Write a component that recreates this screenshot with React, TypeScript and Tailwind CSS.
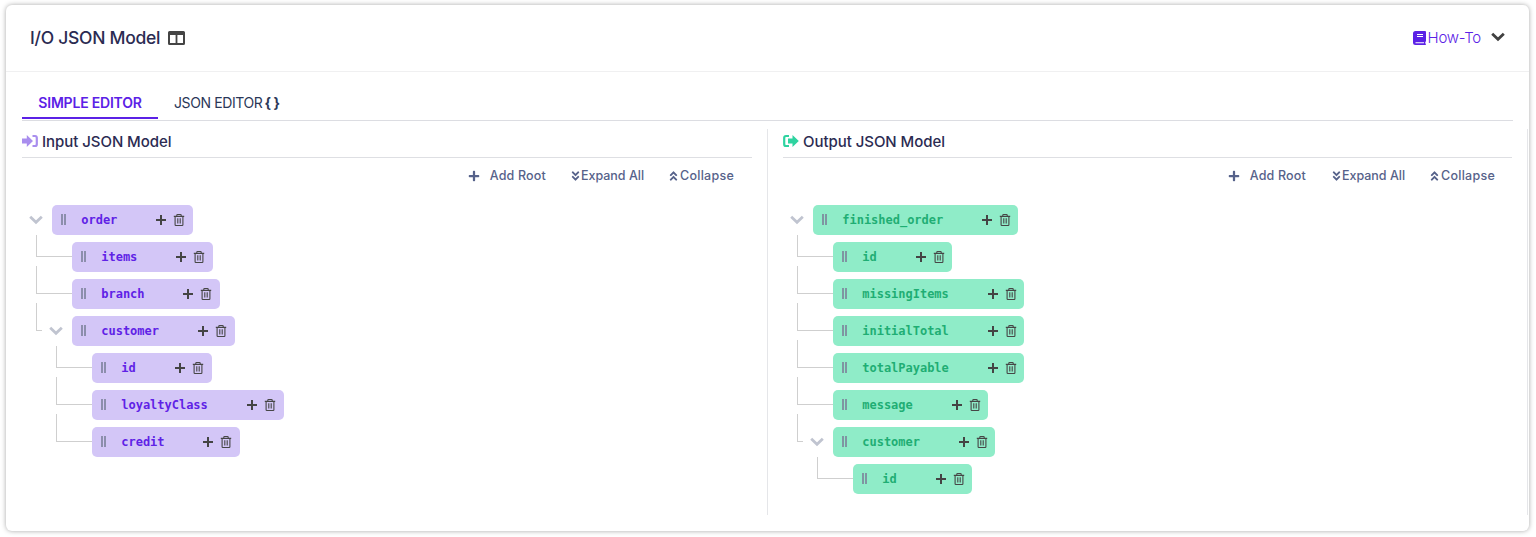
import { FaPlus, FaAngleDoubleDown, FaAngleDoubleUp } from "react-icons/fa";

type Field = { name: string; children?: Field[] };
type Tone = "violet" | "green";

const inputModel: Field = {
  name: "order",
  children: [
    { name: "items" },
    { name: "branch" },
    { name: "customer", children: [{ name: "id" }, { name: "loyaltyClass" }, { name: "credit" }] },
  ],
};

const outputModel: Field = {
  name: "finished_order",
  children: [
    { name: "id" },
    { name: "missingItems" },
    { name: "initialTotal" },
    { name: "totalPayable" },
    { name: "message" },
    { name: "customer", children: [{ name: "id" }] },
  ],
};

const nodeTone = {
  violet: "bg-[#d3c6f7] text-[#5f22e6] pr-[8px]",
  green: "bg-[#8fecc8] text-[#1fae74] pr-[7.400px]",
};

function Chevron({ className }: { className: string }) {
  return (
    <svg viewBox="0 0 14 10" className={className} fill="none" stroke="currentColor" strokeWidth="2.8">
      <path d="M1.2 1.7 7 7.2l5.800-5.500" />
    </svg>
  );
}

function Trash() {
  return (
    <svg viewBox="0 0 12 14" className="h-[14px] w-3 shrink-0" fill="none" stroke="#464646" strokeWidth="1.1">
      <path d="M.8 3.400h10.400M3.800 3.200V2.200q0-.7.7-.7h3q.7 0 .7.7v1M2.100 3.500v8.300q0 .7.7.7h6.400q.7 0 .7-.7V3.500M4.800 5.300v5.300M7.200 5.300v5.300" />
    </svg>
  );
}

function Columns() {
  return (
    <svg viewBox="0 0 17 14" className="mb-px h-[14px] w-[17px]">
      <path
        fillRule="evenodd"
        fill="#444"
        d="M1.500 0h14Q17 0 17 1.500v11q0 1.500-1.500 1.500h-14Q0 14 0 12.500v-11Q0 0 1.500 0zM2 4v8h5.600V4zM9.400 4v8H15V4z"
      />
    </svg>
  );
}

function Node({ field, tone, nested, first }: { field: Field; tone: Tone; nested?: boolean; first?: boolean }) {
  return (
    <div className={nested ? "pl-5" : ""}>
      <div className="relative mb-[7px] flex h-[30px] items-center">
        {nested && (
          <span
            className={`absolute -left-[16px] border-b border-l border-[#cfcfcf] ${first ? "-top-[7px] h-[22px]" : "-top-[13px] h-[28px]"} ${field.children ? "w-[6px]" : "w-9"}`}
          />
        )}
        <span className="flex w-5 shrink-0 text-[#c0c4d0]">
          {field.children && <Chevron className="-ml-[3px] h-[10px] w-[14px] shrink-0" />}
        </span>
        <div className={`flex h-[30px] items-center rounded-[5px] pl-[9px] ${nodeTone[tone]}`}>
          <span className="mb-px mr-[15.300px] flex h-[11px] w-[5px] justify-between">
            <i className="w-[2px] bg-[#7b7f98]/80" />
            <i className="w-[2px] bg-[#7b7f98]/80" />
          </span>
          <span className="mr-[38.800px] font-['DejaVu_Sans_Mono',monospace] text-[12px] leading-4 font-bold tracking-[-0.020px]">
            {field.name}
          </span>
          <svg viewBox="0 0 10 10" className="mr-[7px] h-[10px] w-[10px] shrink-0">
            <path d="M5 0v10M0 5h10" stroke="#444" strokeWidth="2" />
          </svg>
          <Trash />
        </div>
      </div>
      {field.children?.map((child, i) => (
        <Node key={child.name} field={child} tone={tone} nested first={i === 0} />
      ))}
    </div>
  );
}

function Exchange({ out }: { out?: boolean }) {
  return out ? (
    <svg viewBox="0 0 16 14" className="mb-px h-[14px] w-4 text-[#2ed3a0]" fill="none">
      <path d="M6 2H3Q1.200 2 1.200 3.800v6.400Q1.200 12 3 12h3" stroke="currentColor" strokeWidth="2.2" />
      <path d="M5 4.500h4.500V1L15.800 7 9.500 13V9.500H5z" fill="currentColor" />
    </svg>
  ) : (
    <svg viewBox="0 0 16 14" className="mb-px h-[14px] w-4 text-[#a98eee]" fill="none">
      <path d="M10.500 2H13q1.800 0 1.800 1.800v6.400Q14.800 12 13 12h-2.500" stroke="currentColor" strokeWidth="2.2" />
      <path d="M0 4.500h4.800V1L11 7l-6.200 6V9.500H0z" fill="currentColor" />
    </svg>
  );
}

function Panel({ title, field, tone }: { title: string; field: Field; tone: Tone }) {
  const out = tone === "green";
  return (
    <section
      className={`h-[386px] shrink-0 border-r border-[#e5e6e9] ${out ? "w-[760px] pl-[15px] pr-[15px]" : "w-[746px] pr-[15px]"}`}
    >
      <h2 className="flex h-[29px] items-center gap-1 border-b border-[#dedfe3] pb-[3px] text-[15px] font-medium tracking-[-0.050px] text-[#2b2b52]">
        <Exchange out={out} />
        <span className="pt-px">{title}</span>
      </h2>
      <div className={`flex h-9 items-center justify-end text-[12.500px] font-medium text-[#56628a] ${out ? "pr-[17px]" : "pr-[18px]"}`}>
        <FaPlus className="mb-px mr-[10px] size-[12px]" />
        <span className="tracking-[0.150px]">Add Root</span>
        <FaAngleDoubleDown className={`mr-[1px] h-3 w-[9px] ${out ? "ml-[26px]" : "ml-[25px]"}`} />
        <span className="tracking-[0px]">Expand All</span>
        <FaAngleDoubleUp className="ml-[25px] mr-[2px] h-3 w-[9px]" />
        <span className="tracking-[0.250px]">Collapse</span>
      </div>
      <div className="pl-[10px] pt-[11px]">
        <Node field={field} tone={tone} />
      </div>
    </section>
  );
}

export default function App() {
  return (
    <div className="h-[537px] overflow-hidden bg-white pl-[6px] pt-[5px] font-['Inter','Noto_Sans',sans-serif]">
      <main className="h-[526px] w-[1523px] rounded-[6px] bg-white shadow-[0_0_5px_rgba(0,0,0,0.35)]">
        <header className="flex h-[67px] items-center border-b border-[#f0f0f1] pl-6 pr-6">
          <h1 className="mr-2 w-[130px] whitespace-nowrap text-[17.500px] font-medium tracking-[-0.280px] text-[#2b2b52]">I/O JSON Model</h1>
          <Columns />
          <div className="ml-auto flex items-center text-[#5b21e6]">
            <svg viewBox="0 0 13 14" className="mr-[2px] h-[14px] w-[13px]">
              <path d="M2.500 0H12q1 0 1 1v9q0 .7-.7 1v1.500q.7.300.7.800t-.8.700H2.500Q0 14 0 11.500v-9Q0 0 2.500 0z" fill="currentColor" />
              <path d="M4 3.500h6M4 5.500h6M2.500 11.800h8.500" stroke="white" strokeWidth="1.100" />
            </svg>
            <span className="text-[15px] font-light tracking-[-0.250px]">How-To</span>
            <Chevron className="mb-[2px] ml-[10px] h-[10px] w-[14px] text-[#404040]" />
          </div>
        </header>
        <div className="px-4 pt-4">
          <nav className="flex h-[33px] w-[1491px] border-b border-[#dcdde2] text-[14px] leading-[29px]">
            <div className="h-[31px] w-[136px] border-b-2 border-[#5b21e6] text-center font-semibold tracking-[-0.200px] text-[#5b21e6]">SIMPLE EDITOR</div>
            <div className="flex gap-[2px] pl-4 tracking-[-0.400px] text-[#2b3758]">
              JSON EDITOR <b>{"{ }"}</b>
            </div>
          </nav>
          <div className="flex pt-2">
            <Panel title="Input JSON Model" field={inputModel} tone="violet" />
            <Panel title="Output JSON Model" field={outputModel} tone="green" />
          </div>
        </div>
      </main>
    </div>
  );
}
